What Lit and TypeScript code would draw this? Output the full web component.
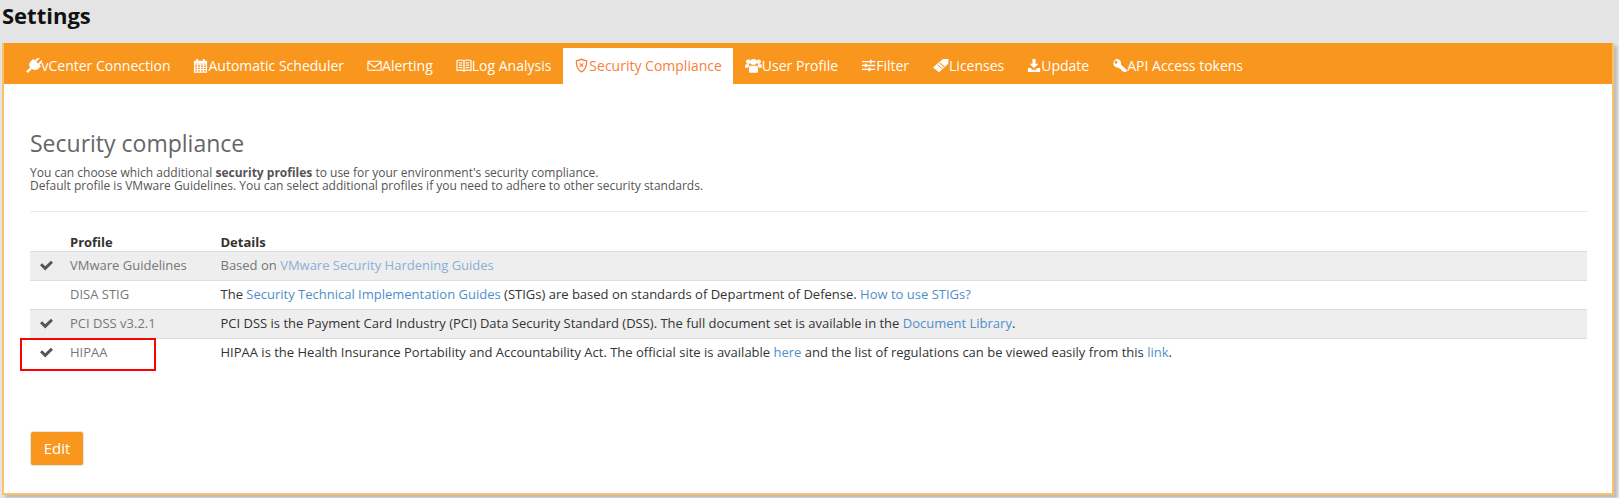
import { LitElement, html, css, svg } from "lit";
import { customElement } from "lit/decorators.js";

const ICONS: Record<string, any> = {
  plug: svg`<g transform="rotate(45 8 8)"><path fill="currentColor" d="M4.700-1.500h2V3.600h2.600V-1.500h2V3.600H13.500V7a5.200 5.200 0 0 1-4.300 5.100V18H6.800V12.100A5.200 5.200 0 0 1 2.500 7V3.600H4.700z"/></g>`,
  calendar: svg`<path fill="none" stroke="currentColor" stroke-width="1.200" d="M1.600 4h12.800v11H1.600zM1.600 7.200h12.800M1.600 9.800h12.800M1.600 12.400h12.800M4.800 7.200V15M8 7.200V15M11.200 7.200V15"/><path fill="currentColor" d="M3.500 1h2v4h-2zM10.500 1h2v4h-2zM1 3h14v3H1z"/>`,
  mail: svg`<path fill="none" stroke="currentColor" stroke-width="1.200" d="M1.600 3.500h12.800a.6.6 0 0 1 .6.6v8.300a.6.6 0 0 1-.6.6H1.600a.6.6 0 0 1-.6-.6V4.100a.6.6 0 0 1 .6-.6zM1.200 4.600 8 9.800l6.800-5.200"/>`,
  book: svg`<path fill="none" stroke="currentColor" stroke-width="1.200" d="M8 3.200C6.200 2 3.200 2 1 2.600v10.800c2.200-.6 5.200-.6 7 .6 1.800-1.200 4.800-1.200 7-.6V2.600C12.800 2 9.800 2 8 3.200zM8 3.200V14M2.800 5.200c1.200-.2 2.400-.1 3.600.3M2.800 7.700c1.200-.2 2.400-.1 3.600.3M2.800 10.200c1.200-.2 2.400-.1 3.600.3M9.600 5.500c1.200-.4 2.400-.5 3.600-.3M9.600 8c1.200-.4 2.400-.5 3.600-.3M9.600 10.500c1.200-.4 2.400-.5 3.600-.3"/>`,
  shield: svg`<path fill="none" stroke="currentColor" stroke-width="1.300" d="M8 1.200c1.600 1.100 3.400 1.600 5.500 1.700.2 5.500-1.300 9.600-5.500 11.900C3.800 12.500 2.300 8.400 2.500 2.900 4.600 2.800 6.400 2.300 8 1.200z"/><path fill="none" stroke="currentColor" stroke-width="1.300" d="M6.200 5.800 9.800 9.400M9.800 5.800 6.200 9.400"/>`,
  users: svg`<circle fill="currentColor" cx="3.200" cy="4" r="2.300"/><circle fill="currentColor" cx="12.800" cy="4" r="2.300"/><circle fill="currentColor" cx="8" cy="4.200" r="3.100"/><path fill="currentColor" d="M.2 10.500V7.800c0-.8.6-1.200 1.300-1.200h2.300a3.800 3.800 0 0 0 .6 1.900C3.400 9 3 9.700 3 10.500zM15.800 10.500V7.800c0-.8-.6-1.200-1.300-1.200h-2.300a3.800 3.800 0 0 1-.6 1.900c1 .5 1.400 1.200 1.400 2zM3.800 15v-4.700c0-1.200.8-2 2-2h4.400c1.200 0 2 .8 2 2V15c0 .5-.4.700-.8.7H4.600c-.4 0-.8-.2-.8-.7z"/>`,
  sliders: svg`<path fill="currentColor" d="M1 3.200h14v1.400H1zM1 7.300h14v1.400H1zM1 11.400h14v1.400H1z"/><path fill="currentColor" d="M9.500 1.900h2v3.900h-2zM4 6h2v3.900H4zM8 10.100h2V14H8z"/>`,
  tag: svg`<path fill="currentColor" d="M10.300 1 15.500 1l-.2 5.200-8.700 9L.9 10z"/><path fill="none" stroke="#f9961e" stroke-width="1" d="M7.300 5.200 11.600 9.500M5.300 7.200 9.600 11.500"/>`,
  download: svg`<path fill="currentColor" d="M6.200 1h3.600v5H13L8 10.800 3 6h3.200zM1 10.600h3.400L6 12.400h4l1.600-1.800H15V15H1z"/>`,
  key: svg`<path fill="currentColor" fill-rule="evenodd" d="M5.300 1a4.400 4.400 0 0 1 4.200 5.800l6 5.800V15h-3.200l-1-1.500-1.600-.2-.3-1.700-1.600-.4-1-1A4.400 4.400 0 1 1 5.300 1zM4.200 3a1.500 1.500 0 1 0 0 3 1.500 1.500 0 0 0 0-3z"/>`,
};

const TABS: [string, string, string][] = [
  ["plug", "vCenter Connection", "w16"],
  ["calendar", "Automatic Scheduler", "w15"],
  ["mail", "Alerting", "w15"],
  ["book", "Log Analysis", "w16"],
  ["shield", "Security Compliance", "w15"],
  ["users", "User Profile", "w17"],
  ["sliders", "Filter", "w15"],
  ["tag", "Licenses", "w17"],
  ["download", "Update", "w14"],
  ["key", "API Access tokens", "w15"],
];

const CHECK = svg`<path fill="currentColor" d="M13.400 2 16 4.600 6.400 14.200 0 7.800l2.600-2.600 3.800 3.800z"/>`;

@customElement("app-root")
export class AppRoot extends LitElement {
  static styles = css`
    :host {
      display: block;
      height: 498px;
      box-sizing: border-box;
      background: #e4e4e4;
      font-family: "Open Sans", sans-serif;
      color: #666;
      overflow: hidden;
    }
    .title {
      margin: 0;
      padding: 0 0 0 2px;
      height: 43px;
      font-size: 22px;
      line-height: 31px;
      font-weight: 700;
      color: #111;
    }
    .card {
      margin: 0 5px 0 2px;
      height: 452px;
      box-sizing: border-box;
      background: #fff;
      border: 1px solid #fbc06b;
      border-width: 0 2px 2px 2px;
      box-shadow: 3px 3px 3px #bbb;
    }
    .tabs {
      display: flex;
      align-items: flex-end;
      height: 41px;
      background: #f9961e;
      padding-left: 10px;
    }
    .tab {
      display: flex;
      align-items: center;
      height: 36px;
      padding: 0 11.5px 2px;
      box-sizing: border-box;
      color: #fff;
      font-size: 14px;
      white-space: nowrap;
    }
    .tab.active {
      background: #fff;
      color: #f9803a;
    }
    .tab svg {
      height: 15px;
      flex: none;
      overflow: hidden;
    }
    .w14 {
      width: 14px;
    }
    .w15 {
      width: 15px;
    }
    .w16 {
      width: 16px;
    }
    .w17 {
      width: 17px;
    }
    .body {
      padding: 0 25px 0 26px;
    }
    h2 {
      margin: 0;
      padding-top: 42px;
      font-size: 23px;
      line-height: 34px;
      font-weight: 400;
      color: #666;
    }
    .intro {
      margin: 6px 0 0;
      font-size: 12px;
      line-height: 13px;
      color: #555;
    }
    .intro b {
      font-weight: 700;
    }
    hr {
      border: 0;
      border-top: 1px solid #eaeaea;
      margin: 19px 0 0;
    }
    table {
      width: 100%;
      margin-top: 21px;
      border-collapse: collapse;
      table-layout: fixed;
      font-size: 13px;
    }
    th {
      text-align: left;
      font-weight: 700;
      color: #333;
      height: 18px;
      padding: 0;
      line-height: 18px;
    }
    th:first-child,
    td:first-child {
      width: 40px;
    }
    th:nth-child(2),
    td:nth-child(2) {
      width: 150.5px;
    }
    thead tr {
      border-bottom: 1px solid #ddd;
    }
    tbody tr {
      border-bottom: 1px solid #ddd;
      height: 29px;
    }
    tbody tr:last-child {
      border-bottom: 0;
    }
    tbody tr.shade {
      background: #eee;
    }
    td {
      padding: 0 0 2px;
      color: #333;
    }
    td:nth-child(2) {
      color: #777;
    }
    tr.muted td {
      color: #777;
    }
    tr.muted a {
      color: #8cafd6;
    }
    a {
      color: #4e8fcb;
      text-decoration: none;
    }
    .check {
      display: block;
      width: 13px;
      height: 13px;
      margin-left: 10px;
      color: #555;
    }
    .mark {
      position: relative;
    }
    .mark::before {
      content: "";
      position: absolute;
      left: -10px;
      top: -1px;
      width: 132px;
      height: 29px;
      border: 2px solid #f00;
    }
    .actions {
      margin-top: 63px;
    }
    button {
      display: block;
      width: 54px;
      height: 35px;
      padding: 0;
      border: 1px solid #e6e6e6;
      border-radius: 3px;
      background: #f9961e;
      color: #fff;
      font: 400 15px "Open Sans", sans-serif;
    }
  `;

  render() {
    return html`
      <h1 class="title">Settings</h1>
      <section class="card">
        <nav class="tabs">
          ${TABS.map(
            ([icon, label, w]) => html`<div class="tab ${label === "Security Compliance" ? "active" : ""}">
              <svg class=${w} viewBox="0 0 16 16" preserveAspectRatio="none">${ICONS[icon]}</svg>${label}
            </div>`
          )}
        </nav>
        <div class="body">
          <h2>Security compliance</h2>
          <p class="intro">
            You can choose which additional <b>security profiles</b> to use for your environment's security compliance.<br />
            Default profile is VMware Guidelines. You can select additional profiles if you need to adhere to other security standards.
          </p>
          <hr />
          <table>
            <thead>
              <tr><th></th><th>Profile</th><th>Details</th></tr>
            </thead>
            <tbody>
              <tr class="shade muted">
                <td>${this.check()}</td>
                <td>VMware Guidelines</td>
                <td>Based on <a href="#">VMware Security Hardening Guides</a></td>
              </tr>
              <tr>
                <td></td>
                <td>DISA STIG</td>
                <td>The <a href="#">Security Technical Implementation Guides</a> (STIGs) are based on standards of Department of Defense. <a href="#">How to use STIGs?</a></td>
              </tr>
              <tr class="shade">
                <td>${this.check()}</td>
                <td>PCI DSS v3.2.1</td>
                <td>PCI DSS is the Payment Card Industry (PCI) Data Security Standard (DSS). The full document set is available in the <a href="#">Document Library</a>.</td>
              </tr>
              <tr>
                <td class="mark">${this.check()}</td>
                <td>HIPAA</td>
                <td>HIPAA is the Health Insurance Portability and Accountability Act. The official site is available <a href="#">here</a> and the list of regulations can be viewed easily from this <a href="#">link</a>.</td>
              </tr>
            </tbody>
          </table>
          <div class="actions"><button>Edit</button></div>
        </div>
      </section>
    `;
  }

  private check() {
    return html`<svg class="check" viewBox="0 0 16 16">${CHECK}</svg>`;
  }
}
